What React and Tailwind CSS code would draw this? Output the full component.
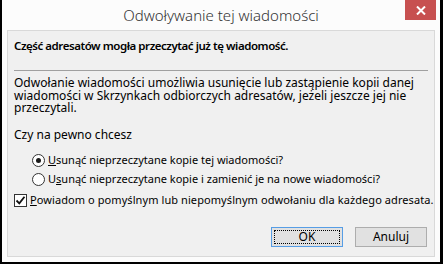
import React from 'react';

const font = { fontFamily: '"Noto Sans", "Liberation Sans", sans-serif' };

function Radio({ checked }) {
  return (
    <span className="w-[13px] h-[13px] rounded-full border border-[#333] bg-white flex items-center justify-center shrink-0">
      {checked && <span className="w-[5px] h-[5px] rounded-full bg-[#1a1a1a]" />}
    </span>
  );
}

function Checkbox() {
  return (
    <span className="w-[13px] h-[13px] border border-[#333] bg-white flex items-center justify-center shrink-0">
      <svg width="11" height="11" viewBox="0 0 11 11">
        <path d="M1.5 5.5 L4.3 8.3 L9.5 1.8" fill="none" stroke="#111" strokeWidth="1.8" />
      </svg>
    </span>
  );
}

export default function App() {
  return (
    <div className="w-[443px] h-[264px] bg-black pl-[2px] pr-[3px] pb-[2px] overflow-hidden" style={font}>
      <div className="h-full bg-[#fcfcfc] flex flex-col">
        {/* Title bar */}
        <div className="h-[30px] relative flex items-center justify-center shrink-0">
          <span className="text-[15px] text-[#333] font-light">Odwoływanie tej wiadomości</span>
          <button className="absolute top-0 right-[4px] w-[31px] h-[20px] bg-[#c75050] flex items-center justify-center">
            <svg width="10" height="9" viewBox="0 0 10 9">
              <path d="M1 0.5 L9 8.5 M9 0.5 L1 8.5" stroke="#fff" strokeWidth="2" />
            </svg>
          </button>
        </div>

        {/* Content panel */}
        <div className="mx-[5px] h-[227px] border border-[#d9d9d9] bg-[#f0f0f0] pl-[6px] pr-[6px] text-[12px] leading-[12px] text-black">
          <p className="font-semibold text-[11.5px] tracking-[-0.45px] mt-[9px] whitespace-nowrap">Część adresatów mogła przeczytać już tę wiadomość.</p>

          <div className="mt-[18px] h-px bg-[#a0a0a0]" />

          <p className="mt-[6px] leading-[12.5px] whitespace-nowrap">
            Odwołanie wiadomości umożliwia usunięcie lub zastąpienie kopii danej
            <br />
            wiadomości w Skrzynkach odbiorczych adresatów, jeżeli jeszcze jej nie
            <br />
            przeczytali.
          </p>

          <p className="mt-[14px]">Czy na pewno chcesz</p>

          <div className="mt-[10px] ml-[18px] flex flex-col text-[11px]">
            <label className="flex items-center gap-[3px] h-[19px] whitespace-nowrap">
              <Radio checked />
              <span><span className="underline">U</span>sunąć nieprzeczytane kopie tej wiadomości?</span>
            </label>
            <label className="flex items-center gap-[3px] h-[19px] whitespace-nowrap">
              <Radio />
              <span>U<span className="underline">s</span>unąć nieprzeczytane kopie i zamienić je na nowe wiadomości?</span>
            </label>
          </div>

          <label className="mt-[2px] flex items-center gap-[3px] h-[19px] whitespace-nowrap text-[11px] tracking-[0.08px]">
            <Checkbox />
            <span><span className="underline">P</span>owiadom o pomyślnym lub niepomyślnym odwołaniu dla każdego adresata.</span>
          </label>

          <div className="mt-[17px] flex justify-end gap-[12px] pr-[1px]">
            <button className="w-[72px] h-[20px] bg-[#e1e1e1] border border-[#569de5] p-[2px]">
              <span className="w-full h-full border border-dotted border-black flex items-center justify-center">OK</span>
            </button>
            <button className="w-[72px] h-[20px] bg-[#e1e1e1] border border-[#adadad] flex items-center justify-center">
              Anuluj
            </button>
          </div>
        </div>
      </div>
    </div>
  );
}
